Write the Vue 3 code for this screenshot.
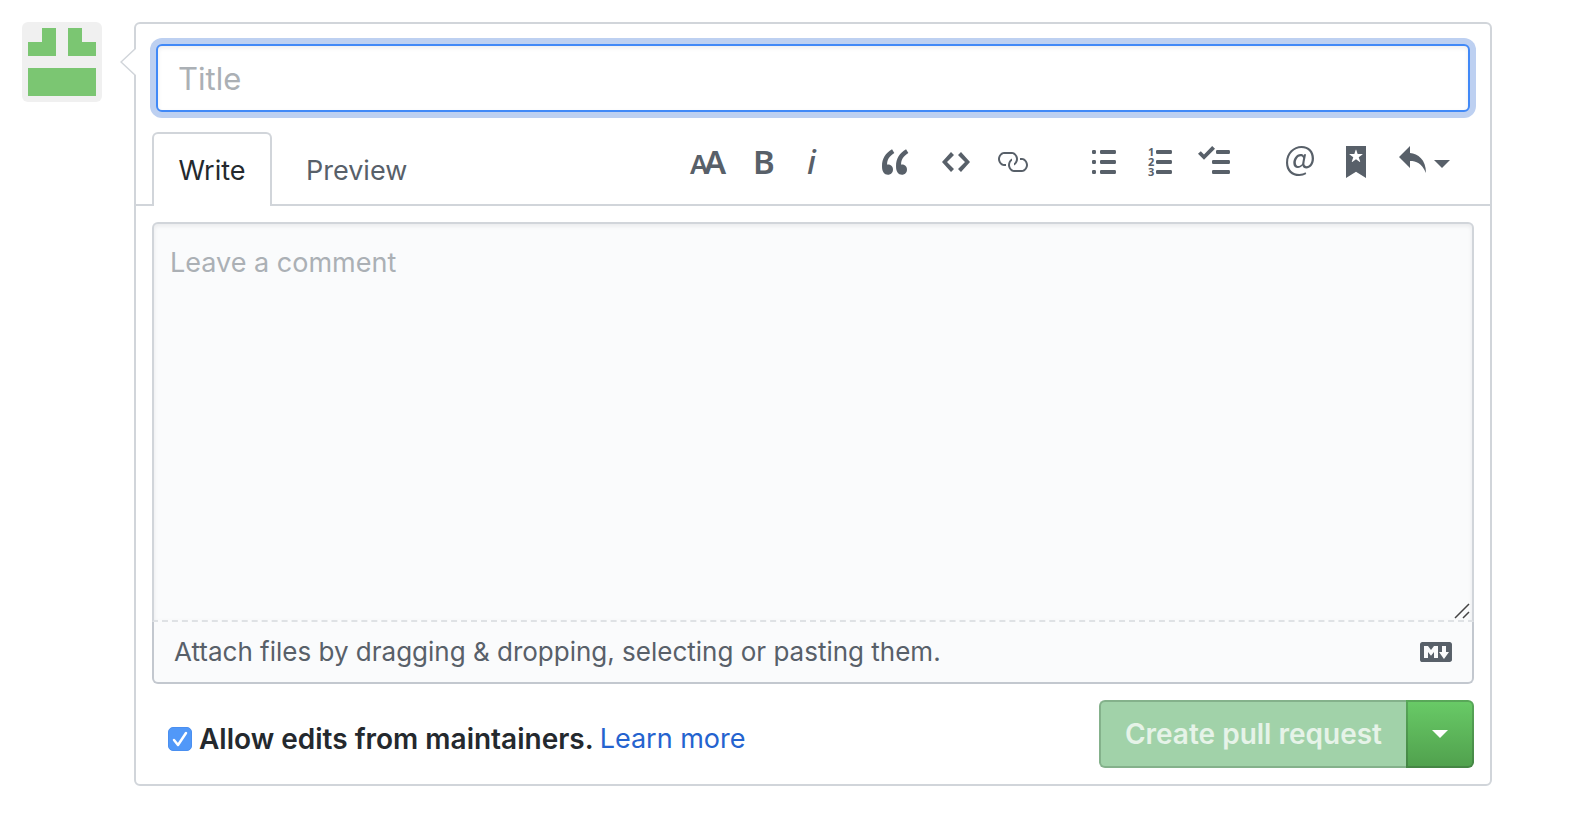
<script setup>
import { ref } from 'vue'

const title = ref('')
const comment = ref('')
const allowEdits = ref(true)

const groups = [
  {
    name: 'text',
    items: [
      {
        label: 'Add header text',
        width: 36,
        letters: [
          { t: 'A', x: 0, y: 28, size: 27 },
          { t: 'A', x: 14, y: 28, size: 33 }
        ]
      },
      { label: 'Add bold text', width: 20, letters: [{ t: 'B', x: -1, y: 28, size: 33 }] },
      { label: 'Add italic text', width: 12, italic: true, letters: [{ t: 'i', x: 1, y: 28, size: 33 }] }
    ]
  },
  {
    name: 'insert',
    items: [
      {
        label: 'Insert a quote',
        width: 28,
        d: 'M6.16 3.5C3.73 5.06 2.55 6.67 2.55 9.36c.16-.05.3-.05.44-.05 1.27 0 2.5.86 2.5 2.41 0 1.61-1.03 2.61-2.5 2.61-1.9 0-2.99-1.52-2.99-4.25 0-3.8 1.75-6.53 5.02-8.42L6.16 3.5zm7 0c-2.43 1.56-3.61 3.17-3.61 5.86.16-.05.3-.05.44-.05 1.27 0 2.5.86 2.5 2.41 0 1.61-1.03 2.61-2.5 2.61-1.89 0-2.98-1.52-2.98-4.25 0-3.8 1.75-6.53 5.02-8.42l1.14 1.84h-.01z'
      },
      {
        label: 'Insert code',
        width: 28,
        d: 'M9.5 3L8 4.5 11.5 8 8 11.5 9.5 13 14 8 9.5 3zm-5 0L0 8l4.5 5L6 11.5 2.5 8 6 4.5 4.5 3z'
      },
      {
        label: 'Add a link',
        width: 32,
        d: 'M4 9h1v1H4c-1.5 0-3-1.69-3-3.5S2.55 3 4 3h4c1.45 0 3 1.69 3 3.5 0 1.41-.91 2.72-2 3.25V8.59c.58-.45 1-1.27 1-2.09C10 5.22 8.98 4 8 4H4c-.98 0-2 1.22-2 2.5S3 9 4 9zm9-3h-1v1h1c1 0 2 1.22 2 2.5S13.98 12 13 12H9c-.98 0-2-1.22-2-2.5 0-.83.42-1.64 1-2.09V6.25c-1.09.53-2 1.84-2 3.25C6 11.31 7.55 13 9 13h4c1.45 0 3-1.69 3-3.5S14.5 6 13 6z'
      }
    ]
  },
  {
    name: 'lists',
    items: [
      {
        label: 'Add a bulleted list',
        width: 24,
        d: 'M2 13c0 .59 0 1-.59 1H.59C0 14 0 13.59 0 13c0-.59 0-1 .59-1h.81c.59 0 .59.41.59 1H2zm2.59-9h6.81c.59 0 .59-.41.59-1 0-.59 0-1-.59-1H4.59C4 2 4 2.41 4 3c0 .59 0 1 .59 1zM1.41 7H.59C0 7 0 7.41 0 8c0 .59 0 1 .59 1h.81c.59 0 .59-.41.59-1 0-.59 0-1-.59-1h.01zm0-5H.59C0 2 0 2.41 0 3c0 .59 0 1 .59 1h.81c.59 0 .59-.41.59-1 0-.59 0-1-.59-1h.01zm10 5H4.59C4 7 4 7.41 4 8c0 .59 0 1 .59 1h6.81c.59 0 .59-.41.59-1 0-.59 0-1-.59-1h.01zm0 5H4.59C4 12 4 12.41 4 13c0 .59 0 1 .59 1h6.81c.59 0 .59-.41.59-1 0-.59 0-1-.59-1h.01z'
      },
      {
        label: 'Add a numbered list',
        width: 24,
        heavy: true,
        d: 'M12 13c0 .59 0 1-.59 1H4.59C4 14 4 13.59 4 13c0-.59 0-1 .59-1h6.81c.59 0 .59.41.59 1H12zM4.59 4h6.81c.59 0 .59-.41.59-1 0-.59 0-1-.59-1H4.59C4 2 4 2.41 4 3c0 .59 0 1 .59 1zm6.81 3H4.59C4 7 4 7.41 4 8c0 .59 0 1 .59 1h6.81c.59 0 .59-.41.59-1 0-.59 0-1-.59-1z',
        letters: [
          { t: '1', x: 0, y: 10, size: 11 },
          { t: '2', x: 0, y: 20, size: 11 },
          { t: '3', x: 0, y: 30, size: 11 }
        ]
      },
      {
        label: 'Add a task list',
        width: 32,
        d: 'M15.41 9H7.59C7 9 7 8.59 7 8c0-.59 0-1 .59-1h7.81c.59 0 .59.41.59 1 0 .59 0 1-.59 1h.01zM9.59 4C9 4 9 3.59 9 3c0-.59 0-1 .59-1h5.81c.59 0 .59.41.59 1 0 .59 0 1-.59 1H9.59zM0 3.91l1.41-1.3L3 4.2 7.09 0 8.5 1.41 3 6.91l-3-3zM7.59 12h7.81c.59 0 .59.41.59 1 0 .59 0 1-.59 1H7.59C7 14 7 13.59 7 13c0-.59 0-1 .59-1z'
      }
    ]
  },
  {
    name: 'people',
    items: [
      {
        label: 'Mention a user or team',
        width: 28,
        d: 'M6.58 15c1.25 0 2.52-.31 3.56-.94l-.42-.94c-.84.52-1.89.83-3.03.83-3.23 0-5.64-2.08-5.64-5.72 0-4.37 3.23-7.18 6.58-7.18 3.45 0 5.22 2.19 5.22 5.2 0 2.39-1.34 3.86-2.5 3.86-1.05 0-1.36-.73-1.05-2.19l.73-3.75H8.98l-.11.72c-.41-.63-.94-.83-1.56-.83-2.19 0-3.66 2.39-3.66 4.38 0 1.67.94 2.61 2.3 2.61.84 0 1.67-.53 2.3-1.25.11.94.94 1.45 1.98 1.45 1.67 0 3.77-1.67 3.77-5C14 2.61 11.59 0 7.83 0 3.66 0 0 3.33 0 8.33 0 12.71 2.92 15 6.58 15zm-.31-5c-.73 0-1.36-.52-1.36-1.67 0-1.45.94-3.22 2.41-3.22.52 0 .84.2 1.25.83l-.52 3.02c-.63.73-1.25 1.05-1.78 1.05V10z'
      },
      {
        label: 'Reference an issue or pull request',
        width: 20,
        d: 'M10 0H0v16l5-3.09L10 16V0zM8.22 4.25L6.36 5.61l.72 2.16c.06.22-.02.28-.2.17L5 6.6 3.12 7.94c-.19.11-.25.05-.2-.17l.72-2.16-1.86-1.36c-.17-.16-.14-.23.09-.23l2.3-.03.7-2.16h.25l.7 2.16 2.3.03c.23 0 .27.08.09.23h.01z'
      },
      {
        label: 'Insert a reply',
        width: 28,
        caret: true,
        d: 'M6 3.5c3.92.44 8 3.125 8 10-2.312-5.062-4.75-6-8-6V11L.5 5.5 6 0v3.5z'
      }
    ]
  }
]
</script>

<template>
  <main class="page">
    <svg class="avatar" viewBox="0 0 80 80" role="img" aria-label="Your avatar">
      <rect width="80" height="80" rx="6" fill="#f0f0f0" />
      <path fill="#7bc672" d="M20 6h14v28H6V20h14zM46 6h14v14h14v14H46zM6 46h68v28H6z" />
    </svg>

    <form class="card" @submit.prevent>
      <svg class="pointer" viewBox="0 0 16 30" aria-hidden="true">
        <path d="M16 1L1 15l15 14" fill="#fff" stroke="#d1d5da" stroke-width="1.5" />
      </svg>

      <input v-model="title" class="title" type="text" placeholder="Title" aria-label="Title" />

      <div class="header">
        <nav class="tabs">
          <button type="button" class="tab active">Write</button>
          <button type="button" class="tab">Preview</button>
        </nav>
        <div class="toolbar">
          <div v-for="g in groups" :key="g.name" class="group" :class="g.name">
            <button v-for="i in g.items" :key="i.label" type="button" class="tool" :aria-label="i.label">
              <svg :width="i.width" height="32" :viewBox="`0 0 ${i.width} 32`" aria-hidden="true">
                <path v-if="i.d" :d="i.d" transform="scale(2)" fill-rule="evenodd" />
                <text v-if="i.letters" :class="{ italic: i.italic, heavy: i.heavy }">
                  <tspan v-for="(c, n) in i.letters" :key="n" :x="c.x" :y="c.y" :font-size="c.size">{{ c.t }}</tspan>
                </text>
              </svg>
              <span v-if="i.caret" class="caret"></span>
            </button>
          </div>
        </div>
      </div>

      <div class="editor">
        <div class="field">
          <textarea v-model="comment" placeholder="Leave a comment" aria-label="Comment"></textarea>
          <svg class="grip" viewBox="0 0 16 16" aria-hidden="true">
            <path d="M1 15L15 1M9 15l6-6" fill="none" stroke="#444" stroke-width="1.5" />
          </svg>
        </div>
        <div class="attach">
          <span>Attach files by dragging &amp; dropping, selecting or pasting them.</span>
          <a href="#" aria-label="Styling with Markdown is supported">
            <svg width="32" height="32" viewBox="0 0 16 16" aria-hidden="true">
              <path fill="#586069" fill-rule="evenodd" d="M14.85 3H1.15C.52 3 0 3.52 0 4.15v7.69C0 12.48.52 13 1.15 13h13.69c.64 0 1.15-.52 1.15-1.15v-7.7C16 3.52 15.48 3 14.85 3zM9 11H7V8L5.5 9.92 4 8v3H2V5h2l1.5 2L7 5h2v6zm2.99.5L9.5 8H11V5h2v3h1.5l-2.51 3.5z" />
            </svg>
          </a>
        </div>
      </div>

      <div class="footer">
        <div class="allow">
          <span class="check">
            <input id="allow-edits" v-model="allowEdits" type="checkbox" />
            <svg v-if="allowEdits" viewBox="0 0 24 24" aria-hidden="true">
              <path d="M6 13l4 5 8-12" fill="none" stroke="#fff" stroke-width="2.5" stroke-linecap="round" stroke-linejoin="round" />
            </svg>
          </span>
          <label for="allow-edits">Allow edits from maintainers.</label>
          <a href="#">Learn more</a>
        </div>
        <div class="actions">
          <button type="submit" class="create" disabled>Create pull request</button>
          <button type="button" class="more" aria-label="Select a type of pull request">
            <span class="caret"></span>
          </button>
        </div>
      </div>
    </form>
  </main>
</template>

<style>
body {
  margin: 0;
  background: #fff;
}
</style>

<style scoped>
* {
  box-sizing: border-box;
}

.page {
  display: flex;
  align-items: flex-start;
  gap: 32px;
  padding: 22px 102px 30px 22px;
  font-family: Inter, "Liberation Sans", sans-serif;
  font-size: 27px;
  line-height: 40px;
  color: #24292e;
}

button,
input,
textarea {
  margin: 0;
  font: inherit;
}

button {
  padding: 0;
  border: 0;
  background: none;
  color: inherit;
}

.avatar {
  flex: none;
  width: 80px;
  height: 80px;
}

.card {
  position: relative;
  flex: 1;
  min-width: 0;
  border: 2px solid #d1d5da;
  border-radius: 6px;
}

.pointer {
  position: absolute;
  top: 23px;
  left: -16px;
  width: 16px;
  height: 30px;
}

.title {
  display: block;
  width: calc(100% - 40px);
  height: 68px;
  margin: 20px;
  padding: 0 20px;
  border: 2px solid #4189f7;
  border-radius: 6px;
  outline: 0;
  box-shadow: inset 0 2px 4px rgba(27, 31, 35, 0.08), 0 0 0 6px #bdd0f1;
  font-size: 31px;
  color: #24292e;
}

.title::placeholder,
textarea::placeholder {
  color: #abb0b5;
  opacity: 1;
}

.header {
  display: flex;
  justify-content: space-between;
  padding: 0 40px 0 16px;
  border-bottom: 2px solid #d1d5da;
}

.tabs {
  display: flex;
  margin-bottom: -2px;
}

.tab {
  height: 74px;
  min-width: 120px;
  padding: 2px 24px 0;
  border: 2px solid transparent;
  border-bottom: 0;
  color: #586069;
}

.tab.active {
  border-color: #d1d5da;
  border-radius: 6px 6px 0 0;
  background: #fff;
  color: #24292e;
}

.tab + .tab {
  margin-left: 8px;
}

.toolbar {
  display: flex;
  padding-top: 14px;
}

.group {
  display: grid;
  align-content: start;
}

.group.text {
  grid-template-columns: 64px 52px 12px;
}

.group.insert {
  grid-template-columns: 60px 54px 32px;
  margin-left: 64px;
}

.group.lists {
  grid-template-columns: 56px 50px 32px;
  margin-left: 64px;
}

.group.people {
  grid-template-columns: 60px 52px 52px;
  margin-left: 56px;
}

.tool {
  display: flex;
  align-items: center;
  gap: 8px;
  color: #586069;
}

.tool svg {
  flex: none;
  overflow: visible;
  fill: currentColor;
}

.tool text {
  font-family: "Noto Sans", sans-serif;
  font-weight: 600;
}

.tool .italic {
  font-weight: 500;
  font-style: italic;
}

.tool .heavy {
  font-weight: 700;
}

.caret {
  width: 16px;
  height: 8px;
  background: currentColor;
  clip-path: polygon(0 0, 100% 0, 50% 100%);
}

.tool .caret {
  margin-top: 4px;
}

.editor {
  margin: 16px;
}

.field {
  position: relative;
}

textarea {
  display: block;
  width: 100%;
  height: 400px;
  padding: 19px 16px;
  border: 2px solid #d1d5da;
  border-bottom: 2px dashed #dfe2e5;
  border-radius: 6px 6px 0 0;
  outline: 0;
  background: #fafbfc;
  box-shadow: inset 0 2px 4px rgba(27, 31, 35, 0.08);
  color: #24292e;
  resize: none;
}

.grip {
  position: absolute;
  right: 4px;
  bottom: 3px;
  width: 16px;
  height: 16px;
  pointer-events: none;
}

.attach {
  display: flex;
  align-items: center;
  justify-content: space-between;
  padding: 10px 20px;
  border: 2px solid #c3c8cf;
  border-top: 0;
  border-radius: 0 0 6px 6px;
  background: #fafbfc;
  font-size: 26px;
  color: #586069;
}

.attach a {
  display: flex;
}

.footer {
  display: flex;
  align-items: center;
  justify-content: space-between;
  margin: 16px;
}

.allow {
  display: flex;
  align-items: center;
  padding: 10px 0 0 16px;
}

.allow label {
  margin: 0 6px 0 7px;
  font-size: 28px;
  font-weight: 600;
}

.allow a {
  color: #2463cf;
  text-decoration: none;
}

.check {
  position: relative;
  display: flex;
}

.check input {
  width: 24px;
  height: 24px;
  border: 1px solid #4a8ff0;
  border-radius: 5px;
  background: #fff;
  appearance: none;
}

.check input:checked {
  background: #5198f8;
}

.check svg {
  position: absolute;
  inset: 0;
  pointer-events: none;
}

.actions {
  display: flex;
}

.create {
  height: 68px;
  padding: 0 24px;
  border: 2px solid #84b18b;
  border-right: 0;
  border-radius: 6px 0 0 6px;
  background: #a1d2a9;
  font-size: 28px;
  font-weight: 600;
  color: #e6f3e8;
}

.more {
  display: flex;
  align-items: center;
  justify-content: center;
  width: 68px;
  height: 68px;
  border: 2px solid rgba(27, 31, 35, 0.2);
  border-radius: 0 6px 6px 0;
  background: linear-gradient(#69cb67, #50a04d) border-box;
  color: #fff;
}
</style>
